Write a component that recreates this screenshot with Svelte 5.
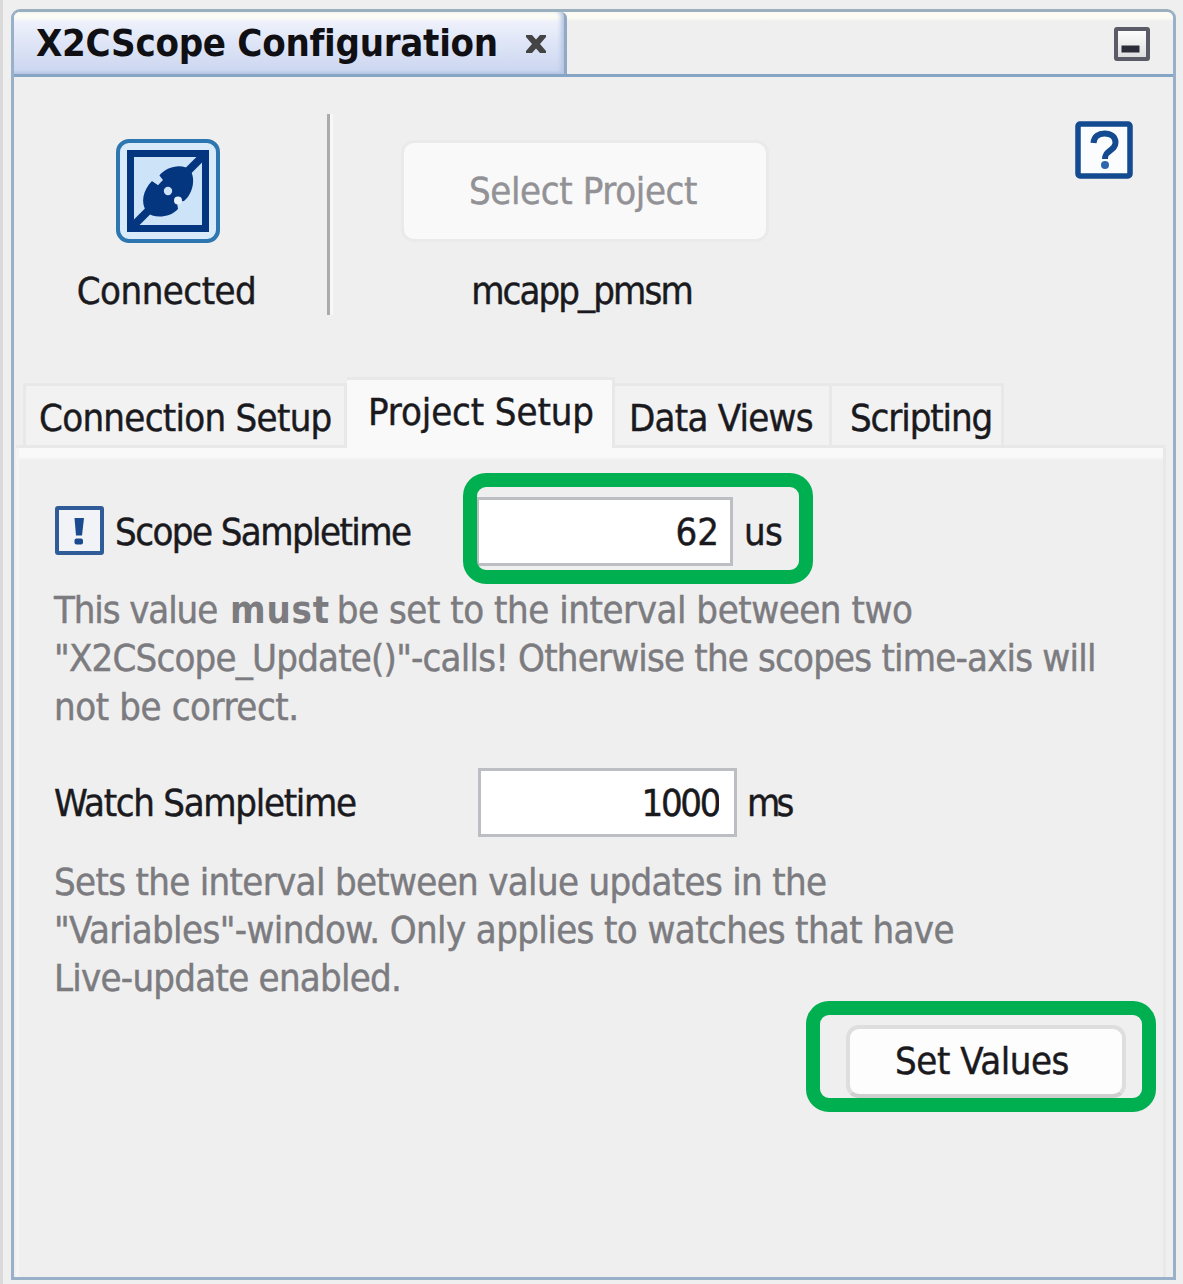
<script>
  let activeTab = $state('project');
  let scopeSampletime = $state('62');
  let watchSampletime = $state('1000');

  const tabs = [
    { id: 'connection', label: 'Connection Setup' },
    { id: 'project', label: 'Project Setup' },
    { id: 'views', label: 'Data Views' },
    { id: 'scripting', label: 'Scripting' },
  ];
</script>

<main class="desktop">
  <section class="window">
    <header class="titlebar">
      <div class="window-tab">
        <h1>X2CScope Configuration</h1>
        <svg class="close" viewBox="0 0 22 20" aria-label="Close">
          <path d="M1 1H7L11 5.500L15 1H21V3L15 10L21 17V19H15L11 14.500L7 19H1V17L7 10L1 3Z" fill="#444" />
        </svg>
      </div>
      <svg class="minimize" viewBox="0 0 36 34" aria-label="Minimize">
        <defs>
          <linearGradient id="min-fill" x1="0" y1="0" x2="0" y2="1">
            <stop offset="0" stop-color="#fff" />
            <stop offset="1" stop-color="#dcdcde" />
          </linearGradient>
        </defs>
        <rect x="2" y="2" width="32" height="30" rx="1" fill="url(#min-fill)" stroke="#5a5b66" stroke-width="4" />
        <rect x="7.500" y="18.500" width="18" height="7" fill="#2b2c38" />
      </svg>
    </header>

    <div class="toolbar">
      <div class="connection">
        <svg class="plug" viewBox="0 0 104 104" aria-label="Connection state">
          <rect x="2" y="2" width="100" height="100" rx="11" fill="#d9eafb" stroke="#2e76b0" stroke-width="4" />
          <rect x="14.500" y="14.500" width="75" height="75" fill="#cce3f8" stroke="#04357f" stroke-width="7" />
          <path d="M18 86L86 18" stroke="#04357f" stroke-width="8" />
          <path d="M43 37C50 27 67 24 74 31C80 39 77 55 68 62L61 63L62 70C54 79 37 80 31 73C24 64 27 51 36 42L42 46L46 41Z" fill="#04357f" />
          <circle cx="52" cy="52" r="4.200" fill="#cce3f8" />
          <circle cx="62" cy="61.500" r="4" fill="#e4f1fc" />
          <path d="M35 41L43 36L47 41L42 46Z" fill="#cce3f8" />
        </svg>
        <span class="connected">Connected</span>
      </div>
      <div class="divider"></div>
      <div class="project">
        <button class="select-project" disabled>Select Project</button>
        <span class="project-name">mcapp_pmsm</span>
      </div>
      <svg class="help" viewBox="0 0 58 58" aria-label="Help">
        <rect x="3" y="3" width="52" height="52" rx="2" fill="#fbfcfe" stroke="#144a90" stroke-width="5.500" />
        <path d="M18.500 22C19 15 24 12.500 29.500 12.500C36 12.500 40.500 16 40.500 21.500C40.500 26 37.500 28 34 30.500C31 32.700 30 34 30 38" fill="none" stroke="#144a90" stroke-width="6" />
        <circle cx="30" cy="44" r="4" fill="#2e66ad" />
      </svg>
    </div>

    <nav class="tabs">
      {#each tabs as tab}
        <button class="tab {tab.id}" class:active={tab.id === activeTab} onclick={() => (activeTab = tab.id)}>
          {tab.label}
        </button>
      {/each}
    </nav>

    <div class="panel">
      <div class="field scope">
        <svg class="notice" viewBox="0 0 49 49" aria-label="Important">
          <rect x="2" y="2" width="45" height="45" rx="1" fill="#f1f3f7" stroke="#2f5b99" stroke-width="4" />
          <path d="M19.500 12H29L27 29.500H21Z" fill="#1b4a8e" />
          <rect x="19.500" y="32.500" width="8.500" height="6" rx="2" fill="#1b4a8e" />
        </svg>
        <label class="scope-label" for="scope">Scope Sampletime</label>
        <div class="value">
          <input id="scope" class="scope-input" bind:value={scopeSampletime} />
          <span class="us">us</span>
          <div class="highlight scope-highlight"></div>
        </div>
      </div>
      <p class="hint">
        <span class="h1a">This value</span>{' '}<strong>must</strong>{' '}<span class="h1b">be set to the interval between two</span><br />
        <span class="h2">"X2CScope_Update()"-calls! Otherwise the scopes time-axis will</span><br />
        <span class="h3">not be correct.</span>
      </p>
      <div class="field watch">
        <label class="watch-label" for="watch">Watch Sampletime</label>
        <div class="value">
          <input id="watch" class="watch-input" bind:value={watchSampletime} />
          <span class="ms">ms</span>
        </div>
      </div>
      <p class="hint second">
        <span class="h4">Sets the interval between value updates in the</span><br />
        <span class="h5">"Variables"-window. Only applies to watches that have</span><br />
        <span class="h6">Live-update enabled.</span>
      </p>
      <div class="actions">
        <button class="set-values">Set Values</button>
        <div class="highlight action-highlight"></div>
      </div>
    </div>
  </section>
</main>

<style>
  :global(body) {
    background: #efefef;
  }
  .desktop,
  .desktop * {
    box-sizing: border-box;
  }
  .desktop {
    height: 1284px;
    padding: 9px 7px 4px 8px;
    border-left: 3px solid #dadada;
    background: #efefef;
    color: #1a1a1e;
    font-family: 'DejaVu Sans Condensed', 'DejaVu Sans', sans-serif;
    font-size: 38px;
    line-height: 48px;
    white-space: nowrap;
    overflow: hidden;
    -webkit-text-stroke: 0.45px;
  }
  button,
  input {
    font: inherit;
    color: inherit;
    margin: 0;
    outline: none;
  }
  .window {
    display: flex;
    flex-direction: column;
    height: 1271px;
    border: 3px solid #98b0c8;
    border-top-color: #9bb0be;
    border-radius: 9px 9px 0 0;
    background: #efefef;
  }

  /* Title bar */
  .titlebar {
    display: flex;
    justify-content: space-between;
    flex: none;
    height: 65px;
    border-bottom: 3px solid #86a4c4;
    border-radius: 6px 6px 0 0;
    background: linear-gradient(#fcfcf5 0 6px, #efefef 9px);
  }
  .window-tab {
    display: flex;
    align-items: center;
    width: 553px;
    padding-left: 22px;
    border-right: 3px solid #91a9c2;
    border-radius: 6px 6px 0 0;
    background: linear-gradient(#fcfcf5 0 5px, #eef1fb 10px, #dce3f6 35px, #ccd7f0 58px, #b4c4e2);
    box-shadow: inset -5px 0 4px -2px #b4c4e2;
  }
  h1 {
    margin: 0;
    width: 465px;
    color: #101014;
    font-size: 38px;
    font-weight: bold;
    letter-spacing: -0.28px;
    -webkit-text-stroke: 0;
  }
  .close {
    width: 22px;
    height: 20px;
    margin: 2px 0 0 24px;
  }
  .minimize {
    width: 36px;
    height: 34px;
    margin: 15px 23px 0 0;
  }

  /* Toolbar */
  .toolbar {
    display: flex;
    flex: none;
    height: 301px;
    padding-top: 37px;
  }
  .connection {
    display: flex;
    flex-direction: column;
    align-items: center;
    width: 313px;
    padding: 25px 6px 0 0;
  }
  .plug {
    width: 104px;
    height: 104px;
  }
  .connected {
    margin: 24px 2px 0 0;
    letter-spacing: -0.5px;
  }
  .divider {
    width: 3px;
    height: 201px;
    background: #ababab;
    box-shadow: 3px 0 1px #f8f8f8;
  }
  .project {
    display: flex;
    flex-direction: column;
    align-items: center;
    width: 370px;
    margin: 26px 0 0 70px;
  }
  .select-project {
    width: 368px;
    height: 102px;
    padding: 0 4px 0 0;
    border: 3px solid #eaeaea;
    border-radius: 13px;
    background: #f9f9f9;
    color: #929296;
    letter-spacing: -0.35px;
  }
  .project-name {
    margin: 25px 7px 0 0;
    letter-spacing: -1.9px;
  }
  .help {
    width: 58px;
    height: 58px;
    margin: 7px 0 0 305px;
  }

  /* Tabs */
  .tabs {
    display: flex;
    flex: none;
    align-items: flex-end;
    height: 70px;
    padding-left: 7px;
    margin: 0 8px 0 2px;
    border-bottom: 3px solid #e8e8e8;
  }
  .tab {
    height: 62px;
    padding: 4px 0 0;
    border: 3px solid #e8e8e8;
    border-width: 3px 3px 0 0;
    background: #f2f2f2;
    text-align: left;
  }
  .connection.tab {
    display: block;
    width: 324px;
    padding-left: 13px;
    border-left-width: 3px;
    letter-spacing: -0.7px;
  }
  .project.tab {
    display: block;
    width: 268px;
    margin: 0 0 -3px;
    padding-left: 21px;
    letter-spacing: -0.1px;
  }
  .tab.active {
    height: 71px;
    padding-bottom: 9px;
    background: #f9f9f9;
  }
  .views {
    width: 217px;
    padding-left: 14px;
    letter-spacing: -0.75px;
  }
  .scripting {
    width: 172px;
    padding-left: 18px;
    letter-spacing: -1.1px;
  }

  /* Panel */
  .panel {
    flex: 1;
    margin: 0 7px 0 2px;
    padding: 49px 37px 0;
    border: solid #e8e8e8;
    border-width: 0 3px 0 0;
    border-left: 3px solid #f4f4f4;
    background: linear-gradient(#f9f9f9 0 9px, #efefef 12px);
  }
  .field {
    display: flex;
    align-items: center;
  }
  .scope {
    height: 69px;
  }
  .notice {
    width: 49px;
    height: 49px;
    margin: -2px 0 0 -1px;
  }
  .scope-label {
    width: 360px;
    padding-left: 11px;
    letter-spacing: -1.56px;
  }
  .value {
    position: relative;
    display: flex;
    align-items: center;
  }
  input {
    width: 259px;
    height: 69px;
    padding: 1px 13px 0;
    border: 3px solid #bdbec4;
    border-radius: 0;
    background: #fff;
    text-align: right;
  }
  .scope-input {
    width: 257px;
    margin-left: 12px;
    padding-right: 11px;
  }
  .us {
    margin-left: 11px;
    letter-spacing: -0.67px;
  }
  .hint {
    margin: 20px 0 0 -2px;
    color: #7b7b80;
    line-height: 48.3px;
  }
  .h1a {
    letter-spacing: -1.1px;
  }
  strong {
    margin-left: 2px;
    letter-spacing: 0.8px;
    -webkit-text-stroke: 0;
  }
  .h1b {
    margin-left: -4px;
    letter-spacing: -0.45px;
  }
  .h2 {
    letter-spacing: -0.8px;
  }
  .h3 {
    letter-spacing: -0.4px;
  }
  .h4 {
    letter-spacing: -0.67px;
  }
  .h5 {
    letter-spacing: -0.6px;
  }
  .h6 {
    letter-spacing: -0.74px;
  }
  .watch {
    height: 69px;
    margin-top: 37px;
  }
  .watch-label {
    width: 424px;
    padding-top: 2px;
    margin-left: -2px;
    letter-spacing: -1.3px;
  }
  .watch-input {
    padding: 2px 15px 0 0;
    letter-spacing: -2.4px;
  }
  .ms {
    margin-left: 10px;
    padding-top: 2px;
    letter-spacing: -3.8px;
  }
  .hint.second {
    margin-top: 21px;
  }
  .actions {
    position: relative;
    display: flex;
    justify-content: flex-end;
    margin-top: 22px;
  }
  .set-values {
    width: 280px;
    height: 73px;
    padding: 0 8px 0 0;
    border: 4px solid #dedede;
    border-bottom-color: #cfcfcf;
    border-radius: 13px;
    background: #fdfdfd;
    letter-spacing: -0.45px;
  }

  /* Callout frames over the controls */
  .highlight {
    position: absolute;
    border: 14px solid #00b050;
    border-radius: 23px;
    pointer-events: none;
  }
  .scope-highlight {
    top: -24px;
    left: -1px;
    width: 350px;
    height: 111px;
  }
  .action-highlight {
    top: -24px;
    right: -30px;
    width: 350px;
    height: 111px;
  }
</style>
